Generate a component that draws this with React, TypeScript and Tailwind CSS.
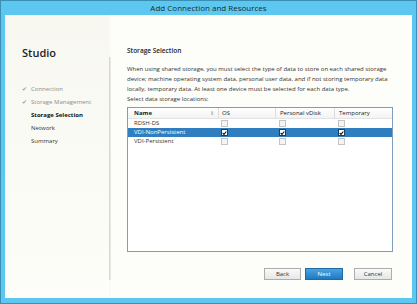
const rows = [
  { name: 'RDSH-DS', checks: [false, false, false], selected: false },
  { name: 'VDI-NonPersistent', checks: [true, true, true], selected: true },
  { name: 'VDI-Persistent', checks: [false, false, false], selected: false },
];

const steps = [
  { label: 'Connection', state: 'done' },
  { label: 'Storage Management', state: 'done' },
  { label: 'Storage Selection', state: 'current' },
  { label: 'Network', state: 'todo' },
  { label: 'Summary', state: 'todo' },
];

const CheckBox = ({ checked, onBlue }: { checked: boolean; onBlue: boolean }) => (
  <div
    className={`w-[7px] h-[7px] flex items-center justify-center border ${
      checked ? 'bg-white border-[#1f3d5c]' : onBlue ? 'bg-white border-[#c9d3dc]' : 'bg-[#f4f4f4] border-[#c4c4c4]'
    }`}
  >
    {checked && (
      <svg width="6" height="6" viewBox="0 0 6 6">
        <path d="M0.8 3 L2.4 4.6 L5.2 1.2" fill="none" stroke="#111" strokeWidth="1.3" />
      </svg>
    )}
  </div>
);

export default function App() {
  return (
    <div
      className="w-[417px] h-[304px] bg-[#5dc8ef] flex flex-col px-[4px] pb-[5px] border border-[#3b8fb4] overflow-hidden"
      style={{ fontFamily: '"Open Sans", "Noto Sans", sans-serif' }}
    >
      <div className="h-[14px] shrink-0 text-center text-[8px] leading-[14px] text-[#1c2b33]">
        Add Connection and Resources
      </div>
      <div className="flex-1 flex bg-[#fbfbf6]">
        {/* left - steps */}
        <div className="w-[104px] shrink-0 pl-[17px] pt-[31px] bg-gradient-to-b from-[#f8f8f1] to-[#fdfdf9]">
          <div className="text-[11px] leading-[14px] font-semibold text-[#222]">Studio</div>
          <div className="mt-[23px] flex flex-col">
            {steps.map((s) => (
              <div key={s.label} className="h-[13px] flex items-center text-[6px] leading-[13px]">
                <span className="w-[9px] text-[#9a9a9a] text-[5.5px]">{s.state === 'done' ? '✔' : ''}</span>
                <span
                  className={
                    s.state === 'done'
                      ? 'text-[#8c8c8c]'
                      : s.state === 'current'
                      ? 'text-[#111] font-bold'
                      : 'text-[#333]'
                  }
                >
                  {s.label}
                </span>
              </div>
            ))}
          </div>
        </div>
        <div className="w-[2px] shrink-0 mt-[42px] mb-[18px] bg-gradient-to-r from-[#d0d0d0] to-[#f0f0ea]" />

        {/* right - content */}
        <div className="flex-1 flex flex-col pl-[16px] pr-[19px] pt-[31px] bg-[#fdfdfa]">
          <div className="text-[6.5px] leading-[10px] text-[#222] font-semibold">Storage Selection</div>
          <p className="mt-[8px] text-[6px] leading-[10px] text-[#333]">
            When using shared storage, you must select the type of data to store on each shared storage
            device; machine operating system data, personal user data, and if not storing temporary data
            locally, temporary data. At least one device must be selected for each data type.
          </p>
          <div className="text-[6px] leading-[10px] text-[#333]">Select data storage locations:</div>
          <div className="mt-[3px] h-[145px] border border-[#7f9db9] bg-white flex flex-col">
            <div className="flex h-[11px] text-[6px] leading-[10px] text-[#222] border-b border-[#e3e3e3] bg-gradient-to-b from-white to-[#f3f3f3]">
              <div className="w-[91px] flex justify-between pl-[6px] pr-[4px] font-bold border-r border-[#dcdcdc]">
                <span>Name</span>
                <span className="font-normal text-[#888] text-[5px]">⇕</span>
              </div>
              <div className="w-[57px] pl-[3px] border-r border-[#dcdcdc]">OS</div>
              <div className="w-[59px] pl-[4px] border-r border-[#dcdcdc]">Personal vDisk</div>
              <div className="flex-1 pl-[4px]">Temporary</div>
            </div>
            {rows.map((r) => (
              <div
                key={r.name}
                className={`flex h-[9px] items-center text-[6px] leading-[9px] ${
                  r.selected ? 'bg-[#2f7fc0] text-white' : 'text-[#333]'
                }`}
              >
                <div className="w-[91px] pl-[6px]">{r.name}</div>
                {r.checks.map((c, i) => (
                  <div key={i} className={i === 0 ? 'w-[57px] pl-[2px]' : i === 1 ? 'w-[59px] pl-[3px]' : 'flex-1 pl-[3px]'}>
                    <CheckBox checked={c} onBlue={r.selected} />
                  </div>
                ))}
              </div>
            ))}
          </div>
          <div className="mt-[16px] flex justify-end pr-[1px]">
            <button className="w-[37px] h-[12px] text-[6px] leading-[10px] text-[#333] border border-[#adadad] bg-gradient-to-b from-[#fafafa] to-[#e6e6e6]">
              Back
            </button>
            <button className="ml-[4px] w-[38px] h-[12px] text-[6px] leading-[10px] text-white border border-[#1f6aa5] bg-gradient-to-b from-[#4aa3e0] to-[#1f79c2]">
              Next
            </button>
            <button className="ml-[11px] w-[38px] h-[12px] text-[6px] leading-[10px] text-[#333] border border-[#adadad] bg-gradient-to-b from-[#fafafa] to-[#e6e6e6]">
              Cancel
            </button>
          </div>
        </div>
      </div>
    </div>
  );
}
